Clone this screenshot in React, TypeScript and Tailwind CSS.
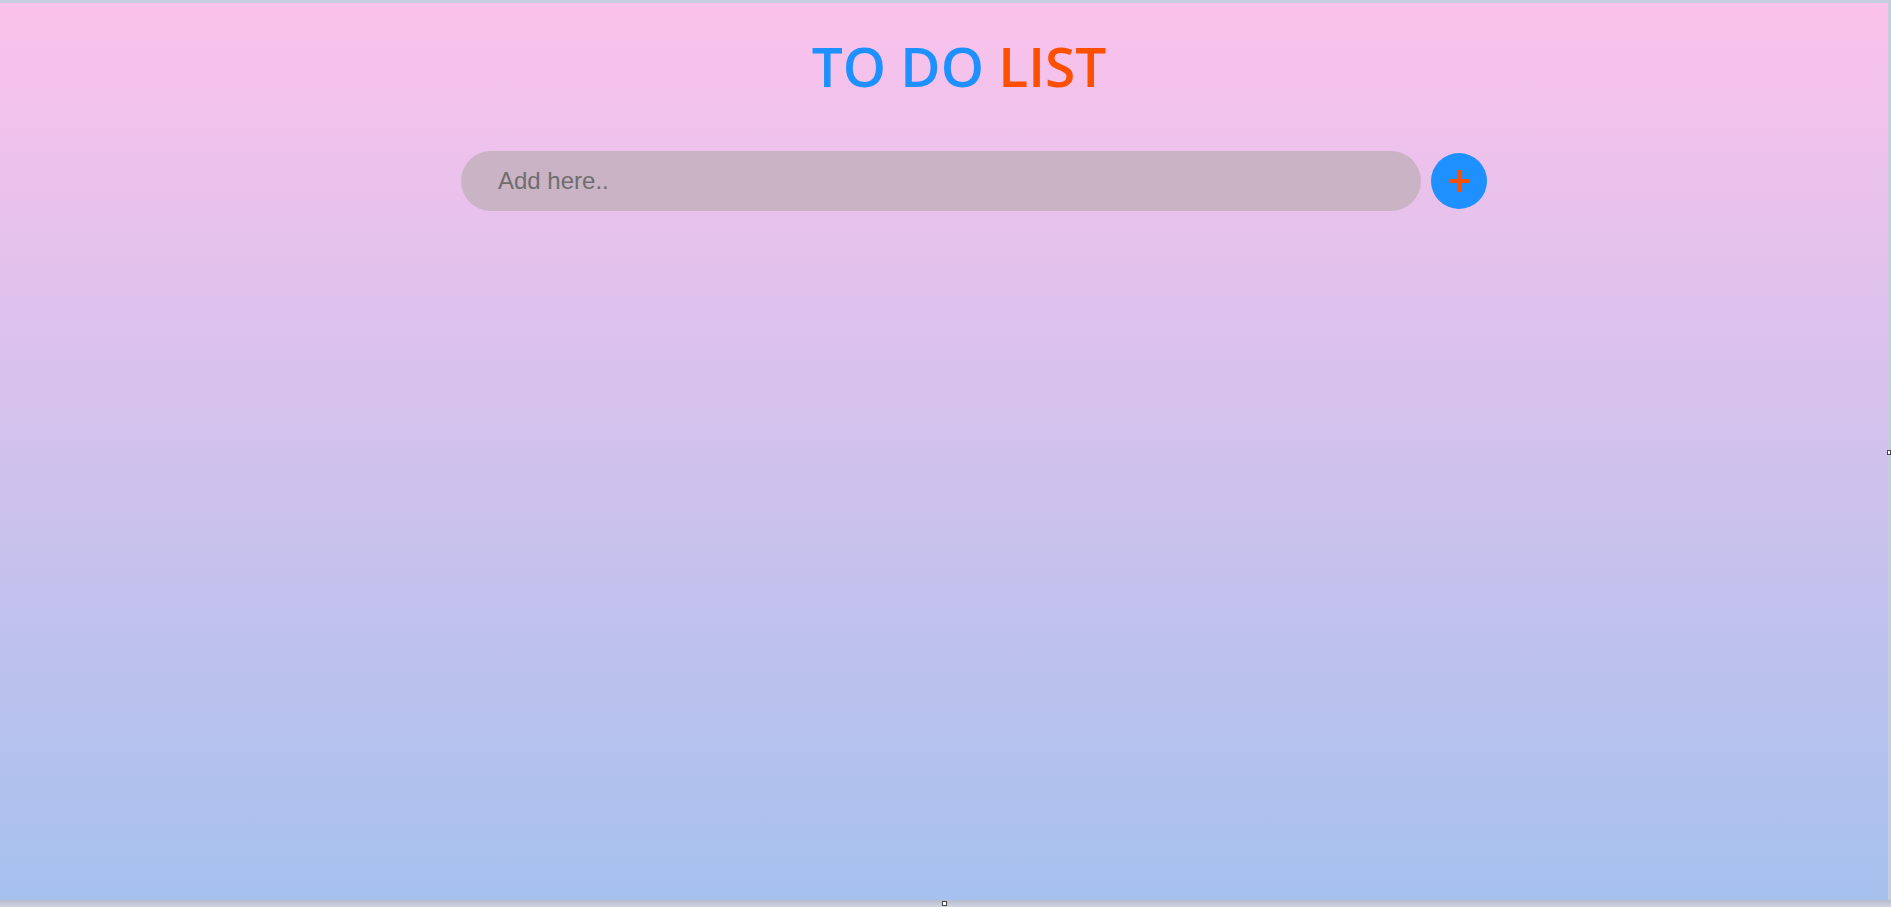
import { useState } from 'react';

/* Simple to-do header: title, input pill and round add button. */
export default function App() {
  const [task, setTask] = useState('');

  return (
    <div className="relative flex h-[907px] w-[1891px] flex-col overflow-hidden bg-[#c5cde0]">
      <div className="mt-[3px] mr-[3px] h-[897px] bg-[linear-gradient(to_bottom,#fbc2eb,#a6c1ee)]">
        <div className="ml-[461px] w-[1026px] pt-[35px]">
          <h1 className="pr-[30px] text-center font-['Open_Sans',sans-serif] text-[55px] font-semibold leading-none">
            <span className="text-[#1e90ff]">TO DO </span>
            <span className="text-[#ff4f00]">LIST</span>
          </h1>

          <div className="mt-[58px] flex items-center gap-[10px]">
            <input
              value={task}
              onChange={(e) => setTask(e.target.value)}
              placeholder="Add here.."
              className="h-[60px] w-[960px] rounded-full bg-[#cbb3c6] pl-[37px] font-['Liberation_Sans',Arial,sans-serif] text-[24px] text-[#555] outline-none placeholder:text-[#6e6e6e]"
            />
            <button className="grid h-[56px] w-[56px] place-items-center rounded-full bg-[#1e90ff]">
              <svg width="21" height="22" viewBox="0 0 21 22">
                <rect x="0" y="9" width="21" height="4" fill="#ff4f00" />
                <rect x="8.5" y="0" width="4" height="22" fill="#ff4f00" />
              </svg>
            </button>
          </div>
        </div>
      </div>

      {/* window frame strip along the bottom */}
      <div className="h-[7px] bg-[linear-gradient(to_bottom,#b6bdcc,#cdd3df)]" />
      <span className="absolute bottom-[1px] left-[942px] h-[5px] w-[5px] border border-[#444] bg-white" />
      <span className="absolute right-0 top-[450px] h-[5px] w-[4px] border border-[#444] bg-white" />
    </div>
  );
}
